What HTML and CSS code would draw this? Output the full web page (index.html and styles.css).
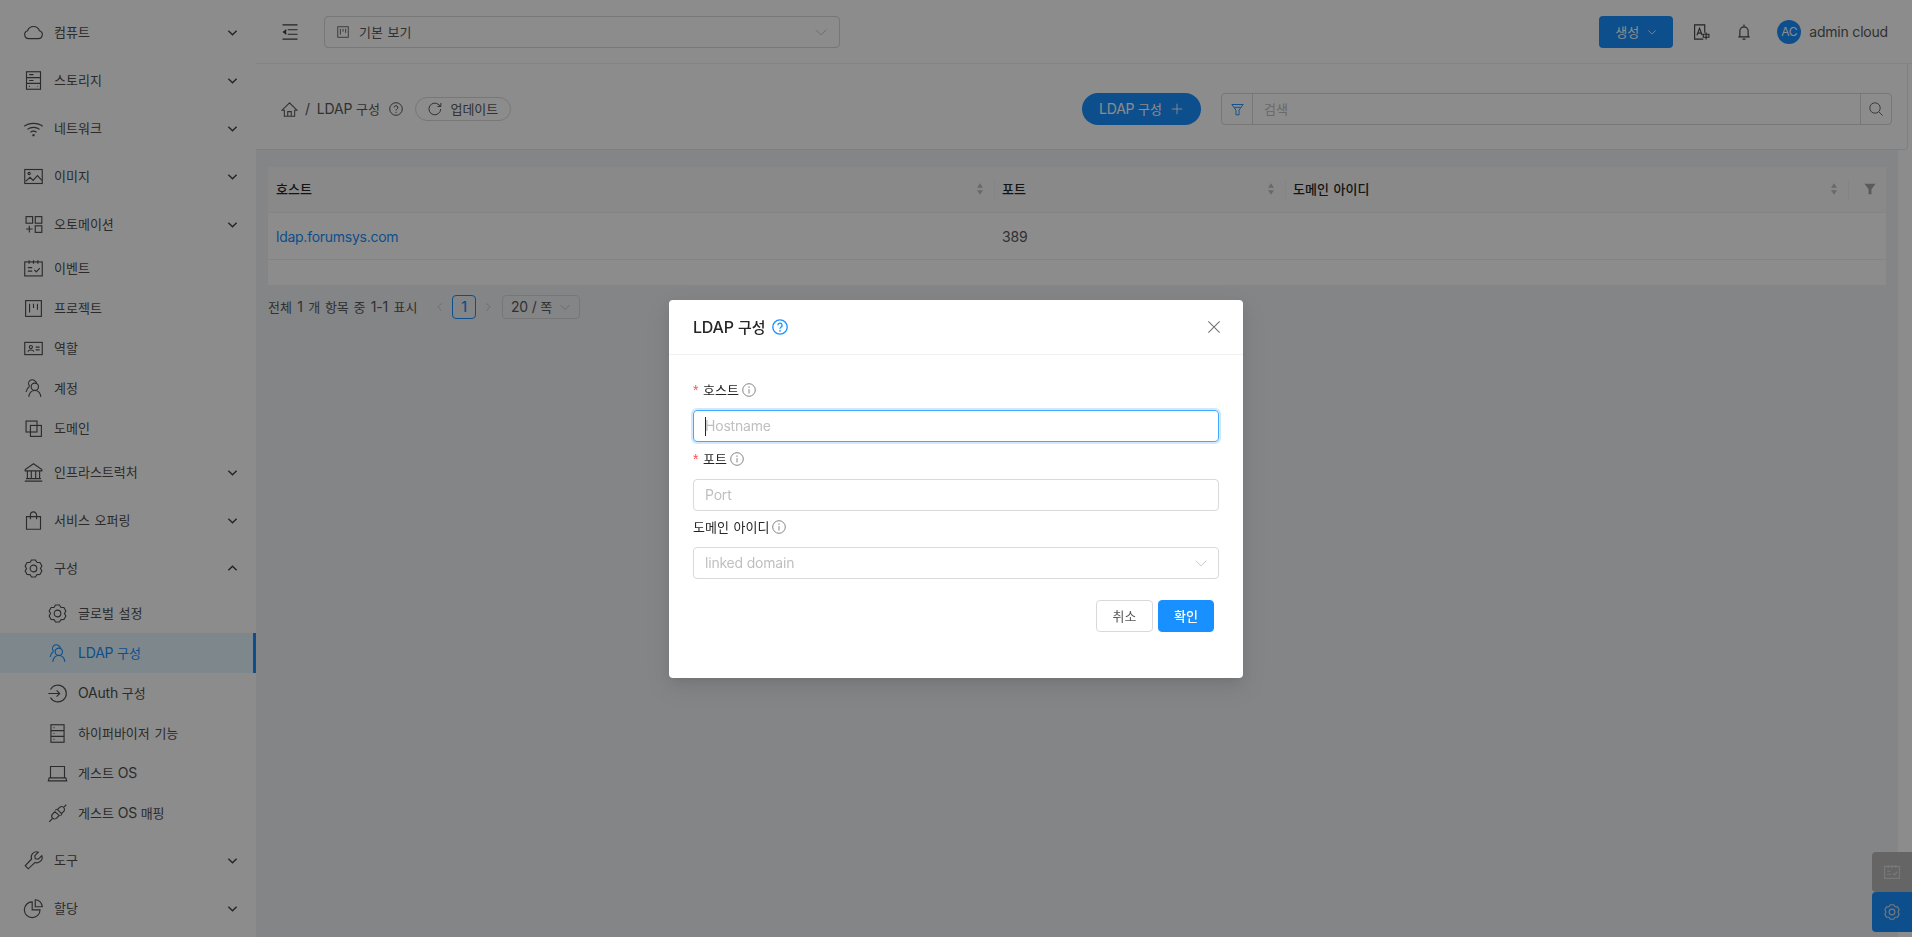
FILE: index.html
```html
<!DOCTYPE html>
<html lang="ko">
<head>
<meta charset="utf-8">
<title>LDAP 구성</title>
<link rel="stylesheet" href="styles.css">
</head>
<body>
<svg class="defs" width="0" height="0" aria-hidden="true">
  <symbol id="i-cloud" viewBox="0 0 24 24"><path d="M6.5 19h11a4.600 4.600 0 0 0 1.300-9A7.200 7.200 0 0 0 5.200 10 4.600 4.600 0 0 0 6.500 19z"/></symbol>
  <symbol id="i-db" viewBox="0 0 24 24"><rect x="4" y="2" width="16" height="20"/><path d="M4 8.700h16M4 15.300h16M7 5.300h5M7 12h5M7 18.700h1M16.500 18.700h.6"/></symbol>
  <symbol id="i-wifi" viewBox="0 0 24 24"><path d="M1.500 9.500C7 5 17 5 22.500 9.500M5 13c4-3 10-3 14 0M8.500 16.300c2-1.400 5-1.400 7 0"/><circle cx="12" cy="19.600" r=".7"/></symbol>
  <symbol id="i-pic" viewBox="0 0 24 24"><rect x="2" y="4" width="20" height="16"/><circle cx="7" cy="8.600" r="1.300"/><path d="M3 17.500 8 13l3.500 3.500L16.500 11l5 5.500"/></symbol>
  <symbol id="i-auto" viewBox="0 0 24 24"><rect x="3.500" y="3" width="7.500" height="7.500"/><rect x="14" y="3" width="7.500" height="7.500"/><rect x="14" y="13.500" width="7.500" height="7.500"/><path d="M7.200 13.500V21M3.500 17.200H11"/></symbol>
  <symbol id="i-sched" viewBox="0 0 24 24"><rect x="2" y="4.500" width="20" height="16"/><path d="M7 2.500v4M12 2.500v4M17 2.500v4M5.500 11h5M5.500 15h5M13 13.500l2.200 2.300 4-4.300"/></symbol>
  <symbol id="i-proj" viewBox="0 0 24 24"><rect x="3" y="3" width="18" height="18"/><path d="M7.500 6.500v10M12 6.500v5M16.500 6.500v7"/></symbol>
  <symbol id="i-id" viewBox="0 0 24 24"><rect x="2" y="5" width="20" height="14"/><circle cx="9" cy="10.400" r="1.800"/><path d="M5.600 15.600c.6-2.600 6.200-2.600 6.800 0M14.500 10.500h4.500M14.500 13.500h4.500"/></symbol>
  <symbol id="i-user" viewBox="0 0 24 24"><circle cx="13.500" cy="10" r="4.200"/><path d="M6.600 21.500c.6-4.600 3.200-7.200 6.900-7.200s6.300 2.600 6.900 7.200M7.600 9.300a4 4 0 0 1 6-6c1 .6 1.600 1.400 2 2.200M7.500 9.500C5.500 11 4 13.200 3.500 16"/></symbol>
  <symbol id="i-dom" viewBox="0 0 24 24"><rect x="3.500" y="3.500" width="12.500" height="12.500"/><rect x="8.500" y="8.500" width="12.500" height="12.500"/></symbol>
  <symbol id="i-bank" viewBox="0 0 24 24"><path d="M12 2 2.500 8.500v1.700h19V8.500zM5 10.500V19M9.500 10.500V19M14.500 10.500V19M19 10.500V19M3.500 19h17M2 21.800h20"/></symbol>
  <symbol id="i-bag" viewBox="0 0 24 24"><path d="M4 7.500h16V22H4zM8.500 10.500V5.700a3.500 3.500 0 0 1 7 0v4.800"/></symbol>
  <symbol id="i-gear" viewBox="0 0 24 24"><path d="M9.750 2.260h4.500L16 5.070l3.310.11 2.250 3.900L20 12l1.560 2.920-2.250 3.900-3.310.11-1.750 2.810h-4.500L8 18.930l-3.310-.11-2.250-3.900L4 12 2.440 9.080l2.250-3.900L8 5.070z"/><circle cx="12" cy="12" r="3.800"/></symbol>
  <symbol id="i-login" viewBox="0 0 24 24"><path d="M4 7.500a9.600 9.600 0 1 1 0 9M1.500 12h13M11 8.500l3.500 3.500-3.500 3.500"/></symbol>
  <symbol id="i-hdd" viewBox="0 0 24 24"><rect x="4.500" y="2" width="15" height="20"/><path d="M4.500 8.700h15M4.500 15.300h15M7.500 5.300h1M7.500 12h1M7.500 18.700h1"/></symbol>
  <symbol id="i-laptop" viewBox="0 0 24 24"><path d="M4 4h16v13H4zM2.500 17h19l1 3.500h-21z"/></symbol>
  <symbol id="i-api" viewBox="0 0 24 24"><path d="M15 4.500a3.400 3.400 0 0 1 4.600 4.600l-3 3-4.600-4.600zM19.600 4.400 22 2M9 10l-3 3a3.300 3.300 0 0 0 4.600 4.600l3.400-3.400zM6 18l-3.500 3.500M9.500 8.500 11 7M15.500 14.500 17 13"/></symbol>
  <symbol id="i-tool" viewBox="0 0 24 24"><path d="M21.500 6.500 17.500 10.500l-3.500-.5-.5-3.500 4-4a6 6 0 0 0-7.700 7.800L2.500 18l3.500 3.500 7.800-7.300a6 6 0 0 0 7.700-7.700z"/></symbol>
  <symbol id="i-pie" viewBox="0 0 24 24"><path d="M10.500 4.500a9 9 0 1 0 9 9h-9z"/><path d="M14 2v8h8a8 8 0 0 0-8-8z"/></symbol>
  <symbol id="i-home" viewBox="0 0 24 24"><path d="M12 2.500 1.500 13h3.200v8.500h14.600V13h3.200zM9.500 21.500V15h5v6.500"/></symbol>
  <symbol id="i-help" viewBox="0 0 24 24"><circle cx="12" cy="12" r="10.800"/><path d="M8.800 9.500a3.200 3.200 0 1 1 4.700 2.800c-1 .6-1.500 1.200-1.500 2.400"/><circle cx="12" cy="17.600" r=".4"/></symbol>
  <symbol id="i-info" viewBox="0 0 24 24"><circle cx="12" cy="12" r="10.800"/><path d="M12 10.500V18"/><circle cx="12" cy="7" r=".5"/></symbol>
  <symbol id="i-reload" viewBox="0 0 24 24"><path d="M20.500 12a8.800 8.800 0 1 1-2.500-6.200L20.500 8M20.800 3v5.200h-5.200"/></symbol>
  <symbol id="i-plus" viewBox="0 0 24 24"><path d="M12 3v18M3 12h18"/></symbol>
  <symbol id="i-search" viewBox="0 0 24 24"><circle cx="10.500" cy="10.500" r="7.800"/><path d="m16 16 6 6"/></symbol>
  <symbol id="i-funnel" viewBox="0 0 24 24"><path d="M3 4h18l-6.500 9v7.500h-5V13z"/><path d="M7 8.500h10"/></symbol>
  <symbol id="i-filled" viewBox="0 0 24 24"><path class="solid" d="M2.500 3h19l-7 9.500V21h-5v-8.500z"/></symbol>
  <symbol id="i-lang" viewBox="0 0 24 24"><path d="M17 13V2.500H3.500v19H15M6.500 16.500 10 7l3.500 9M7.800 13.500h4.500M15 15h7.500v4H15zM18.800 12.500V22"/></symbol>
  <symbol id="i-bell" viewBox="0 0 24 24"><path d="M12 2v2M6.500 18.500v-7.800a5.500 5.500 0 0 1 11 0v7.800M4.500 18.500h15M10 21.500h4"/></symbol>
  <symbol id="i-close" viewBox="0 0 24 24"><path d="m3.500 3.500 17 17M20.500 3.500l-17 17"/></symbol>
  <symbol id="i-down" viewBox="0 0 24 24"><path d="m3 8 9 9 9-9"/></symbol>
  <symbol id="i-up" viewBox="0 0 24 24"><path d="m3 16 9-9 9 9"/></symbol>
  <symbol id="i-left" viewBox="0 0 24 24"><path d="m16 3-9 9 9 9"/></symbol>
  <symbol id="i-right" viewBox="0 0 24 24"><path d="m8 3 9 9-9 9"/></symbol>
  <symbol id="i-menu" viewBox="0 0 24 24"><path d="M2 2.500h20M2 21.500h20M9 9h13M9 15h13"/><path class="solid" d="M7 8v8l-5-4z"/></symbol>
  <symbol id="i-sort" viewBox="0 0 12 20"><path class="solid" d="M6 1.500 10.500 8h-9zM6 18.500 1.500 12h9z"/></symbol>
</svg>

<div class="app">
  <aside class="sidebar">
    <nav class="menu">
      <a class="item group"><svg class="ic"><use href="#i-cloud"/></svg><span class="label ko">컴퓨트</span><svg class="chev"><use href="#i-down"/></svg></a>
      <a class="item group"><svg class="ic"><use href="#i-db"/></svg><span class="label ko">스토리지</span><svg class="chev"><use href="#i-down"/></svg></a>
      <a class="item group"><svg class="ic"><use href="#i-wifi"/></svg><span class="label ko">네트워크</span><svg class="chev"><use href="#i-down"/></svg></a>
      <a class="item group"><svg class="ic"><use href="#i-pic"/></svg><span class="label ko">이미지</span><svg class="chev"><use href="#i-down"/></svg></a>
      <a class="item group"><svg class="ic"><use href="#i-auto"/></svg><span class="label ko">오토메이션</span><svg class="chev"><use href="#i-down"/></svg></a>
      <a class="item"><svg class="ic"><use href="#i-sched"/></svg><span class="label ko">이벤트</span></a>
      <a class="item"><svg class="ic"><use href="#i-proj"/></svg><span class="label ko">프로젝트</span></a>
      <a class="item"><svg class="ic"><use href="#i-id"/></svg><span class="label ko">역할</span></a>
      <a class="item"><svg class="ic"><use href="#i-user"/></svg><span class="label ko">계정</span></a>
      <a class="item"><svg class="ic"><use href="#i-dom"/></svg><span class="label ko">도메인</span></a>
      <a class="item group"><svg class="ic"><use href="#i-bank"/></svg><span class="label ko">인프라스트럭처</span><svg class="chev"><use href="#i-down"/></svg></a>
      <a class="item group"><svg class="ic"><use href="#i-bag"/></svg><span class="label ko">서비스 오퍼링</span><svg class="chev"><use href="#i-down"/></svg></a>
      <a class="item group"><svg class="ic"><use href="#i-gear"/></svg><span class="label ko">구성</span><svg class="chev"><use href="#i-up"/></svg></a>
      <div class="submenu">
        <a class="item sub"><svg class="ic"><use href="#i-gear"/></svg><span class="label ko">글로벌 설정</span></a>
        <a class="item sub active"><svg class="ic"><use href="#i-user"/></svg><span class="label">LDAP <span class="ko">구성</span></span></a>
        <a class="item sub"><svg class="ic"><use href="#i-login"/></svg><span class="label">OAuth <span class="ko">구성</span></span></a>
        <a class="item sub"><svg class="ic"><use href="#i-hdd"/></svg><span class="label ko">하이퍼바이저 기능</span></a>
        <a class="item sub"><svg class="ic"><use href="#i-laptop"/></svg><span class="label"><span class="ko">게스트</span> OS</span></a>
        <a class="item sub"><svg class="ic"><use href="#i-api"/></svg><span class="label"><span class="ko">게스트</span> OS <span class="ko">매핑</span></span></a>
      </div>
      <a class="item group"><svg class="ic"><use href="#i-tool"/></svg><span class="label ko">도구</span><svg class="chev"><use href="#i-down"/></svg></a>
      <a class="item group"><svg class="ic"><use href="#i-pie"/></svg><span class="label ko">할당</span><svg class="chev"><use href="#i-down"/></svg></a>
    </nav>
  </aside>

  <main class="main">
    <header class="topbar">
      <svg class="toggle"><use href="#i-menu"/></svg>
      <div class="project-select">
        <svg class="project-ic"><use href="#i-proj"/></svg>
        <span class="ko project-name">기본 보기</span>
        <svg class="select-arrow"><use href="#i-down"/></svg>
      </div>
      <div class="top-actions">
        <button class="create-btn"><span class="ko">생성</span><svg class="create-arrow"><use href="#i-down"/></svg></button>
        <svg class="top-ic lang"><use href="#i-lang"/></svg>
        <svg class="top-ic bell"><use href="#i-bell"/></svg>
        <span class="avatar">AC</span>
        <span class="username">admin cloud</span>
      </div>
    </header>

    <section class="page-header">
      <div class="crumbs">
        <svg class="home"><use href="#i-home"/></svg>
        <span class="sep">/</span>
        <span class="crumb">LDAP <span class="ko">구성</span></span>
        <svg class="crumb-help"><use href="#i-help"/></svg>
        <button class="refresh"><svg class="refresh-ic"><use href="#i-reload"/></svg><span class="ko">업데이트</span></button>
      </div>
      <div class="header-actions">
        <button class="add-btn">LDAP <span class="ko">구성</span><svg class="add-ic"><use href="#i-plus"/></svg></button>
        <div class="search">
          <span class="search-filter"><svg class="funnel"><use href="#i-funnel"/></svg></span>
          <span class="search-input ko">검색</span>
          <span class="search-btn"><svg class="search-ic"><use href="#i-search"/></svg></span>
        </div>
      </div>
    </section>

    <section class="content">
      <div class="table">
        <div class="row head">
          <div class="cell"><span class="ko">호스트</span><svg class="sort"><use href="#i-sort"/></svg></div>
          <div class="cell"><span class="ko">포트</span><svg class="sort"><use href="#i-sort"/></svg></div>
          <div class="cell"><span class="ko">도메인 아이디</span><svg class="sort"><use href="#i-sort"/></svg></div>
          <div class="cell end"><svg class="col-filter"><use href="#i-filled"/></svg></div>
        </div>
        <div class="row body">
          <div class="cell"><a class="link">ldap.forumsys.com</a></div>
          <div class="cell">389</div>
          <div class="cell"></div>
          <div class="cell"></div>
        </div>
        <div class="table-foot"></div>
      </div>
      <div class="pager">
        <span class="total"><span class="ko">전체</span> 1 <span class="ko">개 항목 중</span> 1-1 <span class="ko">표시</span></span>
        <svg class="page-arrow"><use href="#i-left"/></svg>
        <span class="page-num">1</span>
        <svg class="page-arrow"><use href="#i-right"/></svg>
        <span class="page-size">20 / <span class="ko">쪽</span><svg class="size-arrow"><use href="#i-down"/></svg></span>
      </div>
    </section>
  </main>
</div>

<div class="float-btns">
  <span class="float gray"><svg class="float-ic"><use href="#i-sched"/></svg></span>
  <span class="float blue"><svg class="float-ic"><use href="#i-gear"/></svg></span>
</div>

<div class="mask"></div>

<div class="modal" role="dialog">
  <div class="modal-head">
    <span class="modal-title">LDAP <span class="ko">구성</span></span>
    <svg class="modal-help"><use href="#i-help"/></svg>
    <svg class="modal-close"><use href="#i-close"/></svg>
  </div>
  <form class="modal-body">
    <div class="field-label"><span class="req">*</span><span class="ko">호스트</span><svg class="info"><use href="#i-info"/></svg></div>
    <div class="input focus"><span class="caret"></span><span class="ph">Hostname</span></div>
    <div class="field-label"><span class="req">*</span><span class="ko">포트</span><svg class="info"><use href="#i-info"/></svg></div>
    <div class="input tight"><span class="ph">Port</span></div>
    <div class="field-label"><span class="ko">도메인 아이디</span><svg class="info"><use href="#i-info"/></svg></div>
    <div class="input select"><span class="ph">linked domain</span><svg class="input-arrow"><use href="#i-down"/></svg></div>
    <div class="modal-actions">
      <button type="button" class="btn ko">취소</button>
      <button type="button" class="btn primary ko">확인</button>
    </div>
  </form>
</div>
</body>
</html>
```

FILE: styles.css
```css
* { box-sizing: border-box; }
html, body { margin: 0; height: 100%; }
body {
  font-family: Inter, "Noto Sans CJK KR", sans-serif;
  font-size: 14px;
  line-height: 22px;
  letter-spacing: -.2px;
  color: #595959;
  background: #fff;
  overflow: hidden;
}
.defs { position: absolute; }
svg { fill: none; stroke: currentColor; stroke-width: 1.5; flex: none; display: block; }
svg .solid { fill: currentColor; stroke: none; }
button { font: inherit; letter-spacing: inherit; }
.ko { font-family: "Noto Sans CJK KR", sans-serif; font-size: 13px; word-spacing: 1px; letter-spacing: 0; }

.app { display: flex; height: 937px; }

/* sidebar */
.sidebar { width: 256px; flex: none; background: #fff; height: 100%; overflow: hidden; }
.menu { padding-top: 8px; display: flex; flex-direction: column; }
.item { display: flex; align-items: center; height: 40px; flex: none; padding-left: 24px; color: #4f4f4f; }
.item.group { margin: 4px 0; }
.item .ic { width: 21px; height: 21px; margin-left: -1.5px; margin-right: 10.5px; stroke-width: 1.3; }
.label { flex: 1; }
.chev { width: 11px; height: 11px; margin-right: 18px; stroke-width: 3; color: #404040; }
.submenu { margin: 1px 0 3px; }
.item.sub { padding-left: 48px; }
.item.active { background: #e6f7ff; color: #1890ff; border-right: 3px solid #1890ff; }

/* main */
.main { flex: 1; min-width: 0; display: flex; flex-direction: column; background: #fff; }
.topbar {
  height: 64px; flex: none; background: #fff; display: flex; align-items: center;
  padding: 0 24px 0 25px; border-bottom: 1px solid #f0f0f0;
}
.toggle { width: 18px; height: 18px; color: #404040; }
.project-select {
  width: 516px; height: 32px; margin-left: 25px; border: 1px solid #d9d9d9; border-radius: 4px;
  display: flex; align-items: center; padding: 0 11px;
}
.project-ic { width: 14px; height: 14px; }
.project-name { margin-left: 9px; flex: 1; }
.select-arrow { width: 14px; height: 14px; color: #bfbfbf; stroke-width: 1.5; }
.top-actions { margin-left: auto; display: flex; align-items: center; }
.create-btn {
  width: 74px; height: 32px; border: 0; border-radius: 4px; background: #1890ff; color: #fff;
  display: flex; align-items: center; justify-content: center; gap: 8px;
}
.create-arrow { width: 10px; height: 10px; stroke-width: 2; }
.top-ic { width: 18px; height: 18px; color: #404040; }
.lang { margin-left: 19px; }
.bell { margin-left: 25px; }
.avatar {
  width: 24px; height: 24px; margin-left: 24px; border-radius: 50%; background: #1890ff; color: #fff;
  font-size: 12px; display: flex; align-items: center; justify-content: center;
}
.username { margin-left: 8px; }

.page-header {
  height: 86px; flex: none; margin-right: 4px; background: #fff; border-radius: 0 0 4px 0;
  display: flex; align-items: center; justify-content: space-between; padding: 5px 15px 0 25px;
  border-bottom: 1px solid #e8e8e8; border-right: 1px solid #e8e8e8;
}
.crumbs { display: flex; align-items: center; }
.home { width: 17px; height: 17px; }
.sep { margin: 0 7px; }
.crumb { color: #595959; }
.crumb-help { width: 14px; height: 14px; margin-left: 9px; color: #404040; }
.refresh {
  height: 24px; width: 96px; margin-left: 12px; border: 1px solid #d9d9d9; border-radius: 12px; background: #fff;
  display: flex; align-items: center; justify-content: center; gap: 7px; color: #595959; padding: 0;
}
.refresh-ic { width: 16px; height: 16px; }
.header-actions { display: flex; align-items: center; }
.add-btn {
  width: 119px; height: 32px; border: 0; border-radius: 16px; background: #1890ff; color: #fff;
  display: flex; align-items: center; justify-content: center; gap: 0; padding: 0; white-space: pre;
}
.add-ic { width: 14px; height: 14px; margin-left: 8px; }
.search {
  width: 671px; height: 32px; margin-left: 20px; display: flex; align-items: center;
  border: 1px solid #d9d9d9; border-radius: 4px;
}
.search-filter { width: 31px; height: 100%; border-right: 1px solid #d9d9d9; display: flex; align-items: center; justify-content: center; color: #1890ff; }
.funnel { width: 15px; height: 15px; }
.search-input { flex: 1; padding-left: 11px; color: #bfbfbf; }
.search-btn { width: 31px; height: 100%; border-left: 1px solid #d9d9d9; display: flex; align-items: center; justify-content: center; color: #6e6e6e; }
.search-ic { width: 16px; height: 16px; }

.content { flex: 1; padding: 17px 12px 0; margin-right: 14px; background: #f0f2f5; }
.table { background: #fff; }
.row { display: grid; grid-template-columns: 726px 291px 563px 38px; }
.row.head { height: 46px; padding-bottom: 1px; background: #fafafa; border-bottom: 1px solid #f0f0f0; color: #262626; font-weight: 500; }
.row.body { height: 47px; padding-top: 1px; border-bottom: 1px solid #f0f0f0; color: #595959; }
.cell { display: flex; align-items: center; padding: 0 8px; position: relative; }
.head .cell + .cell::before { content: ""; position: absolute; left: 0; top: 13px; height: 20px; width: 1px; background: #f0f0f0; }
.head .ko { font-weight: 500; }
.sort { width: 8px; height: 14px; margin-left: auto; margin-right: 2px; color: #bfbfbf; }
.cell.end { justify-content: center; padding-left: 13px; }
.col-filter { width: 14px; height: 16px; color: #a6a6a6; }
.link { color: #1890ff; letter-spacing: -.26px; }
.table-foot { height: 25px; }
.pager { display: flex; align-items: center; margin-top: 10px; height: 24px; color: #595959; }
.total { width: 165px; word-spacing: 1.700px; }
.page-arrow { width: 10px; height: 10px; color: #bfbfbf; stroke-width: 2; margin: 0 7px 0 2px; }
.page-num {
  width: 24px; height: 24px; border: 1px solid #1890ff; border-radius: 4px; color: #1890ff; font-weight: 500;
  display: flex; align-items: center; justify-content: center; margin-right: 7px;
}
.page-num + .page-arrow { margin: 0 8px 0 0; }
.page-size {
  width: 78px; height: 24px; margin-left: 1px; border: 1px solid #d9d9d9; border-radius: 4px;
  display: flex; align-items: center; padding-left: 8px; white-space: pre;
}
.size-arrow { width: 12px; height: 12px; color: #bfbfbf; margin-left: 7px; stroke-width: 1.8; }

.float-btns { position: fixed; right: 0; top: 852px; display: flex; flex-direction: column; }
.float { width: 40px; height: 40px; display: flex; align-items: center; justify-content: center; border-radius: 4px 0 0 4px; color: #fff; }
.float.gray { background: #b8b8b8; color: #ddd; }
.float.blue { background: #1890ff; color: #ddd; }
.float-ic { width: 18px; height: 18px; }

.mask { position: fixed; inset: 0; background: rgba(0, 0, 0, .45); }

/* modal */
.modal {
  position: fixed; left: 669px; top: 300px; width: 574px; height: 378px; background: #fff; border-radius: 4px;
  box-shadow: 0 3px 6px -4px rgba(0,0,0,.12), 0 6px 16px rgba(0,0,0,.08), 0 9px 28px 8px rgba(0,0,0,.05);
}
.modal-head {
  height: 55px; display: flex; align-items: center; padding: 0 24px; border-bottom: 1px solid #f0f0f0; color: #262626;
}
.modal-title { font-size: 16px; font-weight: 500; }
.modal-title .ko { font-size: 15px; font-weight: 500; }
.modal-help { width: 16px; height: 16px; margin-left: 6px; color: #1890ff; stroke-width: 2; }
.modal-close { width: 16px; height: 16px; margin-left: auto; margin-right: -3px; color: #737373; stroke-width: 1.600; }
.modal-body { padding: 24px 24px 0; }
.field-label { height: 22px; display: flex; align-items: center; color: #262626; margin-bottom: 9px; }
.req { color: #ff4d4f; width: 10px; font-size: 14px; font-family: "Liberation Sans", sans-serif; }
.info { width: 14px; height: 14px; margin-left: 3px; color: #737373; }
.input {
  height: 32px; border: 1px solid #d9d9d9; border-radius: 4px; display: flex; align-items: center; padding: 0 11px;
  margin-bottom: 6px; position: relative;
}
.input.tight { margin-bottom: 5px; }
.input.focus { border-color: #40a9ff; box-shadow: 0 0 0 2px rgba(24, 144, 255, .2); }
.caret { position: absolute; left: 11px; top: 6px; height: 19px; width: 1px; background: #262626; }
.ph { color: #bfbfbf; }
.select { justify-content: space-between; }
.input-arrow { width: 14px; height: 14px; color: #bfbfbf; stroke-width: 1.5; margin-right: -1px; }
.modal-actions { display: flex; justify-content: flex-end; gap: 5px; margin-top: 21px; padding-right: 5px; }
.btn { width: 57px; height: 32px; border: 1px solid #d9d9d9; border-radius: 4px; background: #fff; color: #595959; padding: 0; }
.btn.primary { width: 56px; background: #1890ff; border-color: #1890ff; color: #fff; font-weight: 500; }
```
